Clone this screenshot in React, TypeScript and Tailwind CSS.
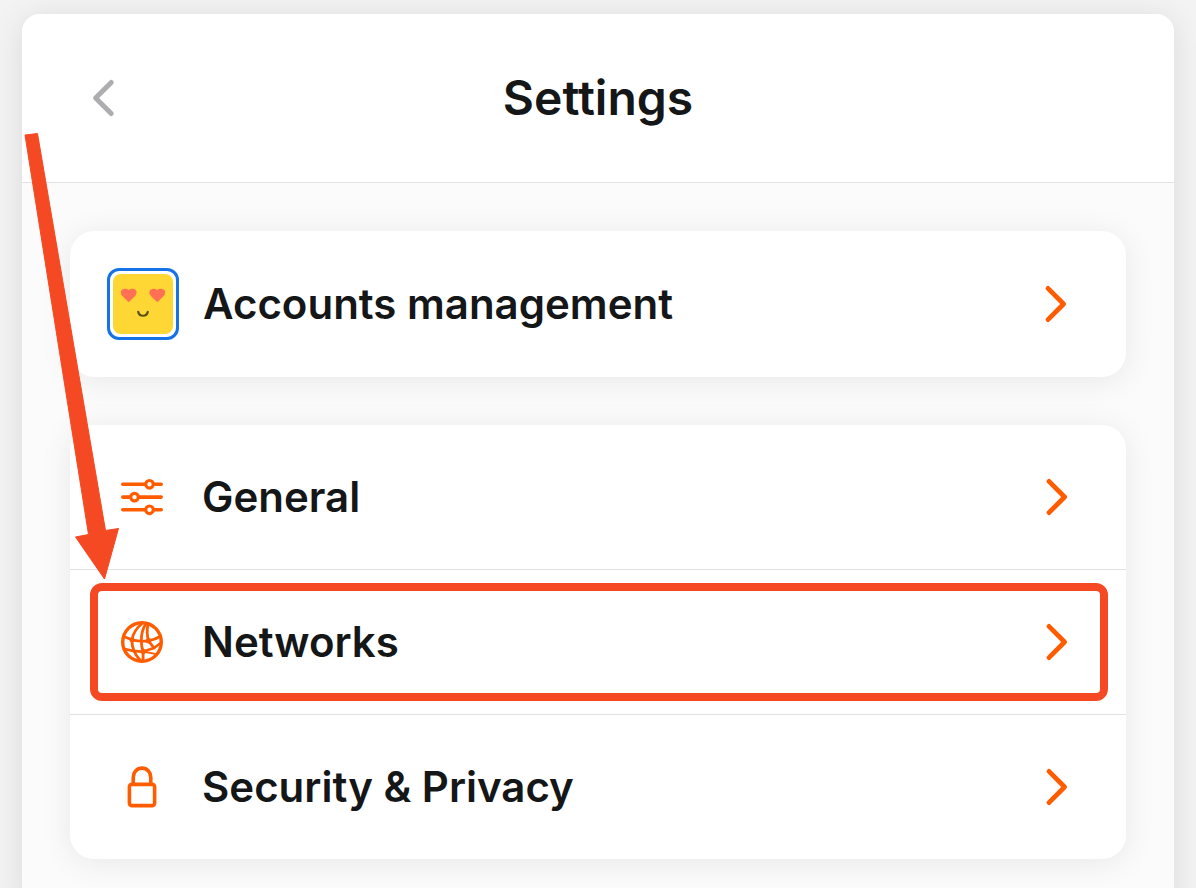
import React from 'react';

const ChevronLeft: React.FC = () => (
  <svg viewBox="0 0 24 40" className="w-6 h-10" fill="none" aria-hidden="true">
    <path d="M19.200 4.400 3.600 20l15.600 15.600" stroke="#adacb0" strokeWidth="5" strokeLinecap="round" strokeLinejoin="round" />
  </svg>
);

const ChevronRight: React.FC = () => (
  <svg viewBox="0 0 24 40" className="w-6 h-10" fill="none" aria-hidden="true">
    <path d="M5 4.400 20.600 20 5 35.600" stroke="#ff5c00" strokeWidth="4.800" strokeLinecap="round" strokeLinejoin="round" />
  </svg>
);

const Avatar: React.FC = () => (
  <svg viewBox="0 0 72 72" className="w-18 h-18" aria-hidden="true">
    <rect x="1.5" y="1.5" width="69" height="69" rx="10.5" fill="#fff" stroke="#1672e6" strokeWidth="3" />
    <rect x="6" y="6" width="60" height="60" rx="8" fill="#ffd735" />
    <g fill="#ff7152">
      <path d="M21.700 34.200l-6.400-6.200c-3-3.300-1.200-7.200 2.400-7.200 1.800 0 3.200.4 4 1.400.8-1 2.200-1.400 4-1.400 3.600 0 5.400 3.900 2.400 7.200z" />
      <path d="M50.300 34.200l-6.400-6.200c-3-3.300-1.200-7.200 2.400-7.200 1.800 0 3.200.4 4 1.400.8-1 2.200-1.400 4-1.400 3.600 0 5.400 3.900 2.400 7.200z" />
    </g>
    <path d="M31.200 43.800c1 5.300 8.600 5.300 9.600 0" fill="none" stroke="#5c5214" strokeWidth="2.200" strokeLinecap="round" />
  </svg>
);

const SlidersIcon: React.FC = () => (
  <svg viewBox="0 0 48 48" className="w-12 h-12" fill="none" stroke="#ff5c00" strokeLinecap="round" aria-hidden="true">
    <path d="M4.800 11.300h38.400M4.800 24.100h38.400M4.800 36.800h38.400" strokeWidth="3.600" />
    <g fill="#fff" strokeWidth="3.200">
      <circle cx="31.500" cy="11.300" r="3.800" />
      <circle cx="16.500" cy="24.100" r="3.800" />
      <circle cx="31.500" cy="36.800" r="3.800" />
    </g>
  </svg>
);

const GlobeIcon: React.FC = () => (
  <svg viewBox="0 0 48 48" className="w-12 h-12" fill="none" stroke="#ff5c00" strokeWidth="2.800" strokeLinecap="round" strokeLinejoin="round" aria-hidden="true">
    <circle cx="24" cy="24" r="19.300" strokeWidth="3.400" />
    <path d="M24 5.500C18.500 10 15 15.500 14 21.800c-.2 4 .6 8 2 11.200 1.200 3 3.200 5.800 6 9" />
    <path d="M28 5.500c-3.500 5.500-4.900 11.500-4.700 17.500 0 4 .7 7.500 1.900 10.500L25 42" />
    <path d="M30 6c-1 5.500-1.200 11.500.5 16.800l5.500 7.200" />
    <path d="M5.500 18.500 14 21.800c5.500 1.400 11 1.800 16.500 1 4.500-.8 8.500-2.300 12-4.500" />
    <path d="M6.500 31c6 1.800 12 2.700 18.700 2.500L36 30l6-4.500" />
    <path d="m25.200 33.500 11.800 2.300" strokeWidth="1.800" />
    <g fill="#ff5c00" stroke="none">
      <circle cx="14" cy="21.800" r="2.500" />
      <circle cx="30.500" cy="22.800" r="2.700" />
      <circle cx="25.200" cy="33.500" r="2.600" />
    </g>
  </svg>
);

const LockIcon: React.FC = () => (
  <svg viewBox="0 0 48 48" className="w-12 h-12" fill="none" stroke="#ff5c00" strokeWidth="3.600" aria-hidden="true">
    <rect x="11.400" y="21.400" width="25.200" height="21.200" rx="2.400" />
    <path d="M15.200 21v-6.500a8.800 9.400 0 0 1 17.600 0V21" />
  </svg>
);

interface RowProps {
  icon: React.ReactNode;
  label: string;
  highlighted?: boolean;
}

const SettingsRow: React.FC<RowProps> = ({ icon, label, highlighted }) => (
  <li className="relative">
    <button type="button" className="flex w-full h-36 items-center gap-6 px-9 text-left">
      <span className="flex w-18 shrink-0 justify-center">{icon}</span>
      <span className="flex-1 text-[42px] leading-12 font-semibold">{label}</span>
      <span className="flex w-17 shrink-0 justify-center">
        <ChevronRight />
      </span>
    </button>
    {highlighted && (
      <div className="pointer-events-none absolute left-5 right-[18px] inset-y-[13px] rounded-xl border-8 border-[#f54923]" />
    )}
  </li>
);

const cardShadow = 'shadow-[0_4px_32px_rgba(0,0,0,0.08)]';

const App: React.FC = () => {
  return (
    <div className="min-h-screen overflow-hidden bg-[#f3f3f3] px-[22px] pt-3.5 font-['Inter',sans-serif] text-[#141618]">
      <main className="relative min-h-screen rounded-t-[18px] bg-[#fbfbfb] shadow-[0_4px_32px_rgba(0,0,0,0.1)]">
        <header className="flex items-center rounded-t-[18px] border-b border-[#e2e2e3] bg-white px-12 h-[169px]">
          <button type="button" aria-label="Back" className="flex w-17 h-18 items-center justify-center">
            <ChevronLeft />
          </button>
          <h1 className="flex-1 text-center text-5xl font-semibold">Settings</h1>
          <div className="w-17" />
        </header>

        <div className="flex flex-col gap-12 p-12">
          <ul className={`rounded-3xl border border-white bg-white ${cardShadow}`}>
            <SettingsRow icon={<Avatar />} label="Accounts management" />
          </ul>
          <ul className={`rounded-3xl bg-white divide-y divide-[#e2e2e3] ${cardShadow}`}>
            <SettingsRow icon={<SlidersIcon />} label="General" />
            <SettingsRow icon={<GlobeIcon />} label="Networks" highlighted />
            <SettingsRow icon={<LockIcon />} label="Security & Privacy" />
          </ul>
        </div>

        <svg
          viewBox="0 0 110 460"
          className="pointer-events-none absolute left-0 top-[116px] w-[110px] h-[460px]"
          aria-hidden="true"
        >
          <path
            d="M3 5 15.500 3.500 83.500 400.500 96.500 398.500 82.500 449 53.500 407 66.500 404.500z"
            fill="#f54923"
            stroke="#f54923"
            strokeWidth="1"
            strokeLinejoin="round"
          />
        </svg>
      </main>
    </div>
  );
};

export default App;
